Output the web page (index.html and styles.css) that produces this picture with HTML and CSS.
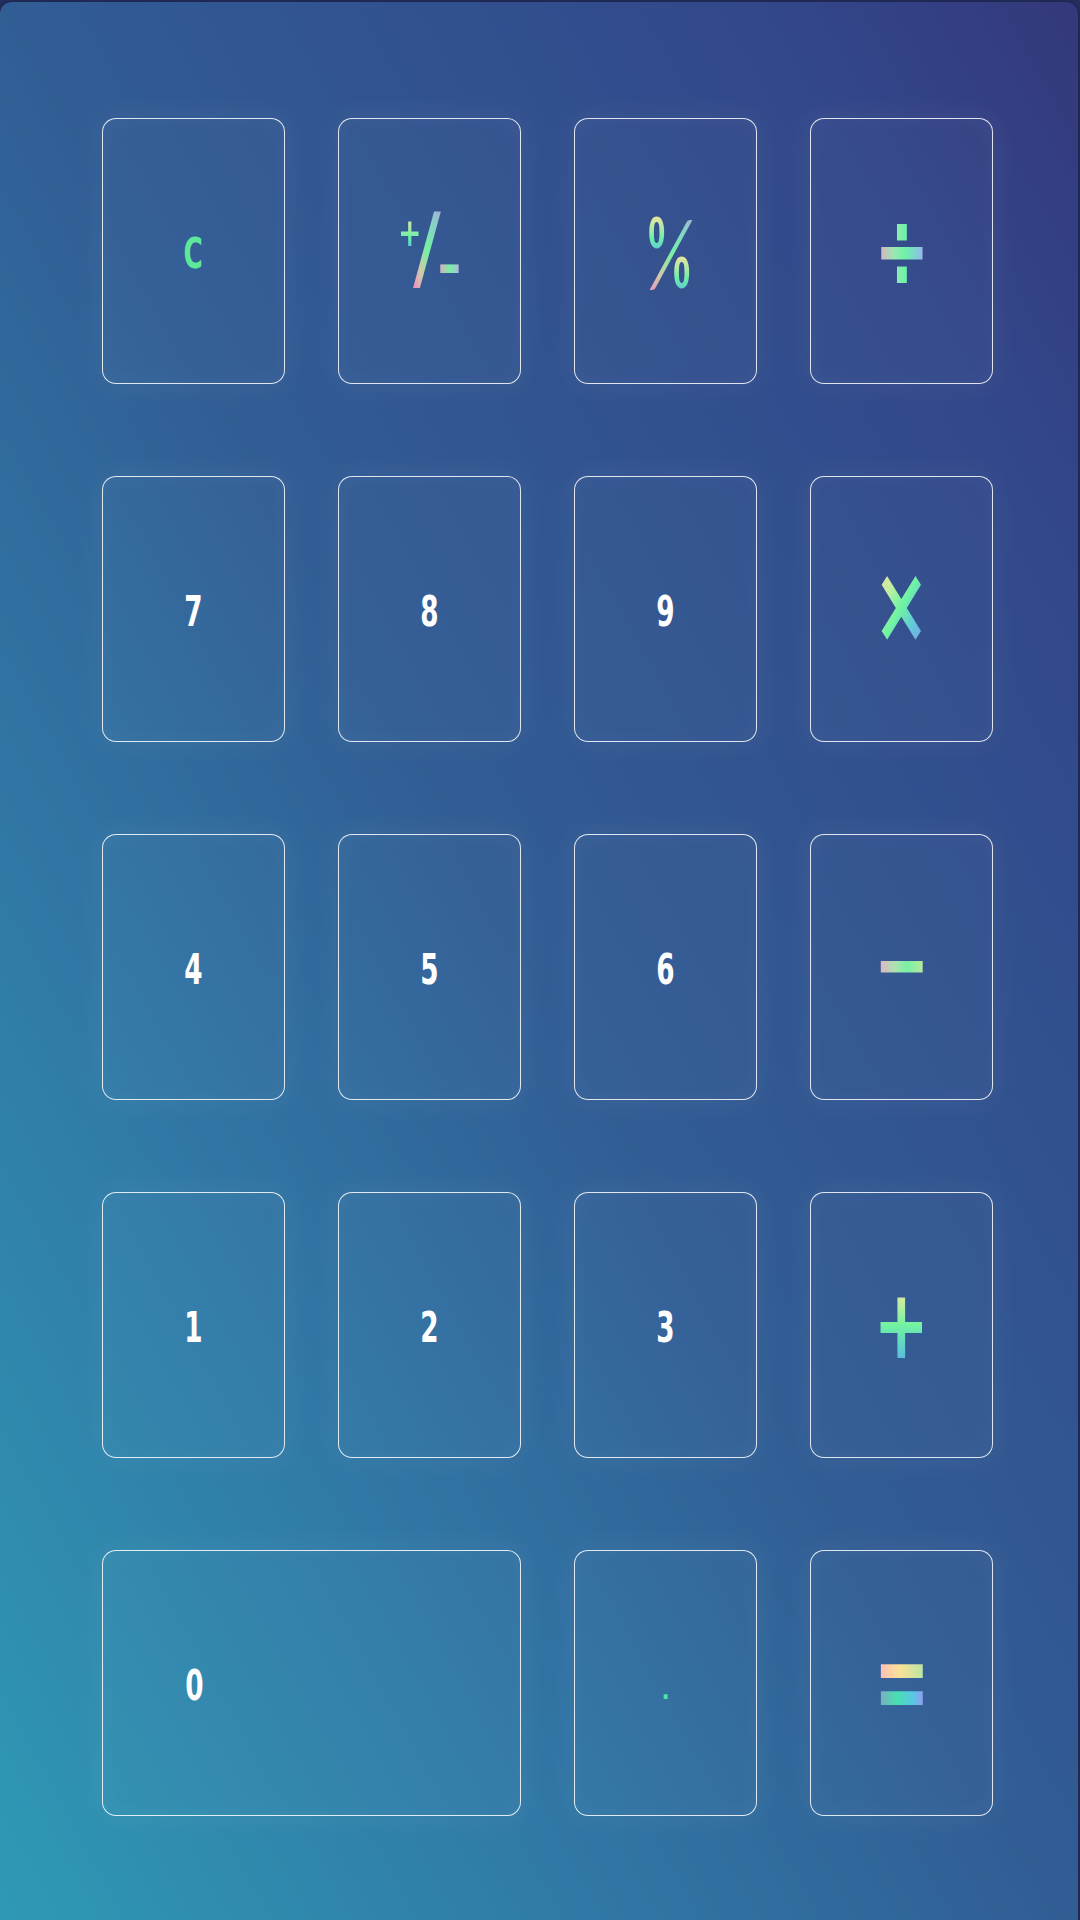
FILE: index.html
```html
<!DOCTYPE html>
<html lang="en">
<head>
<meta charset="utf-8">
<title>Calculator</title>
<link rel="stylesheet" href="styles.css">
</head>
<body>
<div class="calc">
  <div class="keys">
    <button class="key"><span class="txt fn-c">C</span></button>
    <button class="key"><span class="combo combo-sign"><span class="part sign-plus holo-v">+</span><span class="part sign-slash holo-s">/</span><span class="part sign-minus holo-h">-</span></span></button>
    <button class="key"><span class="combo combo-pct"><span class="part pct-slash holo-s">/</span><span class="part pct-zero pct-top holo-v">0</span><span class="part pct-zero pct-bot holo-v">0</span></span></button>
    <button class="key"><span class="op op-div">÷</span></button>

    <button class="key"><span class="txt">7</span></button>
    <button class="key"><span class="txt">8</span></button>
    <button class="key"><span class="txt">9</span></button>
    <button class="key"><span class="op op-mul">×</span></button>

    <button class="key"><span class="txt">4</span></button>
    <button class="key"><span class="txt">5</span></button>
    <button class="key"><span class="txt">6</span></button>
    <button class="key"><span class="op op-minus">−</span></button>

    <button class="key"><span class="txt">1</span></button>
    <button class="key"><span class="txt">2</span></button>
    <button class="key"><span class="txt">3</span></button>
    <button class="key"><span class="op op-plus">+</span></button>

    <button class="key key-zero"><span class="zero-slot"><span class="txt">0</span></span></button>
    <button class="key"><span class="txt fn-dot">.</span></button>
    <button class="key"><span class="op op-eq">=</span></button>
  </div>
</div>
</body>
</html>
```
FILE: styles.css
```css
html, body {
  margin: 0;
  padding: 0;
  height: 100%;
  overflow: hidden;
  background: #26305e;
}

.calc {
  margin: 2px 2px 0 0;
  height: 1960px;
  border-radius: 12px 12px 0 0;
  background: linear-gradient(to top right, #2f9ab5 0%, #3079a7 28%, #315d95 50%, #31528f 68%, #32478a 86%, #34387c 100%);
  box-shadow: 0 0 4px rgba(10, 15, 45, 0.6);
}

.keys {
  display: grid;
  grid-template-columns: repeat(4, 183px);
  grid-auto-rows: 266px;
  column-gap: 53px;
  row-gap: 92px;
  padding: 116px 0 0 102px;
}

.key {
  appearance: none;
  margin: 0;
  padding: 0;
  box-sizing: border-box;
  border: 1px solid rgba(255, 255, 255, 0.85);
  border-radius: 14px;
  background: rgba(255, 255, 255, 0.025);
  box-shadow: 0 0 28px 4px rgba(255, 255, 255, 0.05), inset 0 0 24px rgba(255, 255, 255, 0.035);
  display: flex;
  align-items: center;
  justify-content: center;
  cursor: pointer;
}

.key-zero {
  grid-column: span 2;
  justify-content: flex-start;
}

.zero-slot {
  width: 182px;
  display: flex;
  justify-content: center;
}

.txt {
  font-family: "DejaVu Sans Condensed", "DejaVu Sans", sans-serif;
  font-weight: 700;
  font-size: 43px;
  line-height: 1;
  color: #ffffff;
  display: inline-block;
  transform: translateY(2px) scaleX(0.68);
}

.fn-c {
  color: #5ee89b;
}

.fn-dot {
  color: #4fe3a0;
  font-size: 24px;
  transform: translateY(8px);
}

/* holographic operator glyphs */
.op {
  font-family: "DejaVu Sans", sans-serif;
  font-weight: 700;
  line-height: 1;
  display: inline-block;
  color: transparent;
  -webkit-background-clip: text;
  background-clip: text;
}

.op-plus {
  font-size: 96px;
  transform: scaleX(0.69);
  background-image:
    linear-gradient(to bottom, #f7eca0 0%, #c9eda0 25%, #72f3a2 50%, #5fd2c8 72%, #5d9ff0 100%);
}

.op-minus {
  font-size: 100px;
  transform: translateY(-3px) scaleX(0.67);
  background-image: linear-gradient(to right, #f6a2c8 0%, #a6e6b0 40%, #79f0a6 60%, #d6e69a 100%);
}

.op-mul {
  font-size: 108px;
  transform: translateY(-4px) scaleX(0.62);
  background-image:
    linear-gradient(to bottom right, #ffd0a8 0%, #c9eea0 30%, #70f4a2 50%, #62c6dc 70%, #9880f2 100%);
}

.op-div {
  font-size: 100px;
  transform: scale(0.66, 1.08);
  background-image:
    linear-gradient(to right, #f39ac8 0%, #9ce8b0 35%, #6ff2a6 55%, #86c8e0 80%, #c090f0 100%);
}

.op-eq {
  font-size: 100px;
  transform: translateY(-2px) scale(0.67, 1.2);
  background-image:
    linear-gradient(to right, #ffb2c2 0%, #fbe196 45%, #a8e6a8 100%),
    linear-gradient(to right, #8f98c8 0%, #48e0b0 40%, #56c8e4 70%, #c07cf8 100%);
  background-size: 100% 50%, 100% 50%;
  background-position: top, bottom;
  background-repeat: no-repeat;
}

/* composed labels: +/- and % */
.combo {
  position: relative;
  display: block;
}

.combo-sign {
  width: 57px;
  height: 78px;
  transform: translateY(1px);
}

.combo-pct {
  width: 40px;
  height: 71px;
  transform: translate(3px, 2px);
}

.part {
  position: absolute;
  display: block;
  line-height: 1;
  color: transparent;
  -webkit-background-clip: text;
  background-clip: text;
  transform-origin: 0 0;
  white-space: nowrap;
}

.sign-plus {
  font-family: "DejaVu Sans", sans-serif;
  font-weight: 700;
  font-size: 39px;
  left: -3px;
  top: 0;
  transform: scaleX(0.72);
}

.sign-slash {
  font-family: "DejaVu Sans Condensed", "DejaVu Sans", sans-serif;
  font-weight: 400;
  font-size: 92px;
  left: 12px;
  top: -11px;
}

.sign-minus {
  font-family: "DejaVu Sans", sans-serif;
  font-weight: 700;
  font-size: 60px;
  left: 36px;
  top: 22px;
}

.pct-zero {
  font-family: "DejaVu Sans Condensed", "DejaVu Sans", sans-serif;
  font-weight: 700;
  font-size: 42px;
  transform: scaleX(0.66);
}

.pct-top {
  left: -1px;
  top: -5px;
}

.pct-bot {
  left: 24px;
  top: 35px;
}

.pct-slash {
  font-family: "Lato", "Roboto", sans-serif;
  font-weight: 300;
  font-size: 90px;
  left: -4px;
  top: -12px;
  transform: scaleX(1.33);
}

.holo-v {
  background-image: linear-gradient(to bottom, #f8e59a 0%, #a8eaa8 40%, #6cf0a8 60%, #58b8ec 100%);
}

.holo-h {
  background-image: linear-gradient(to right, #f49cc8 0%, #78f0a8 50%, #c2a8e8 100%);
}

.holo-s {
  background-image: linear-gradient(to top right, #f482c6 0%, #d2c8a8 25%, #74f2a4 50%, #88d0c8 75%, #b2a4e0 100%);
}
```
